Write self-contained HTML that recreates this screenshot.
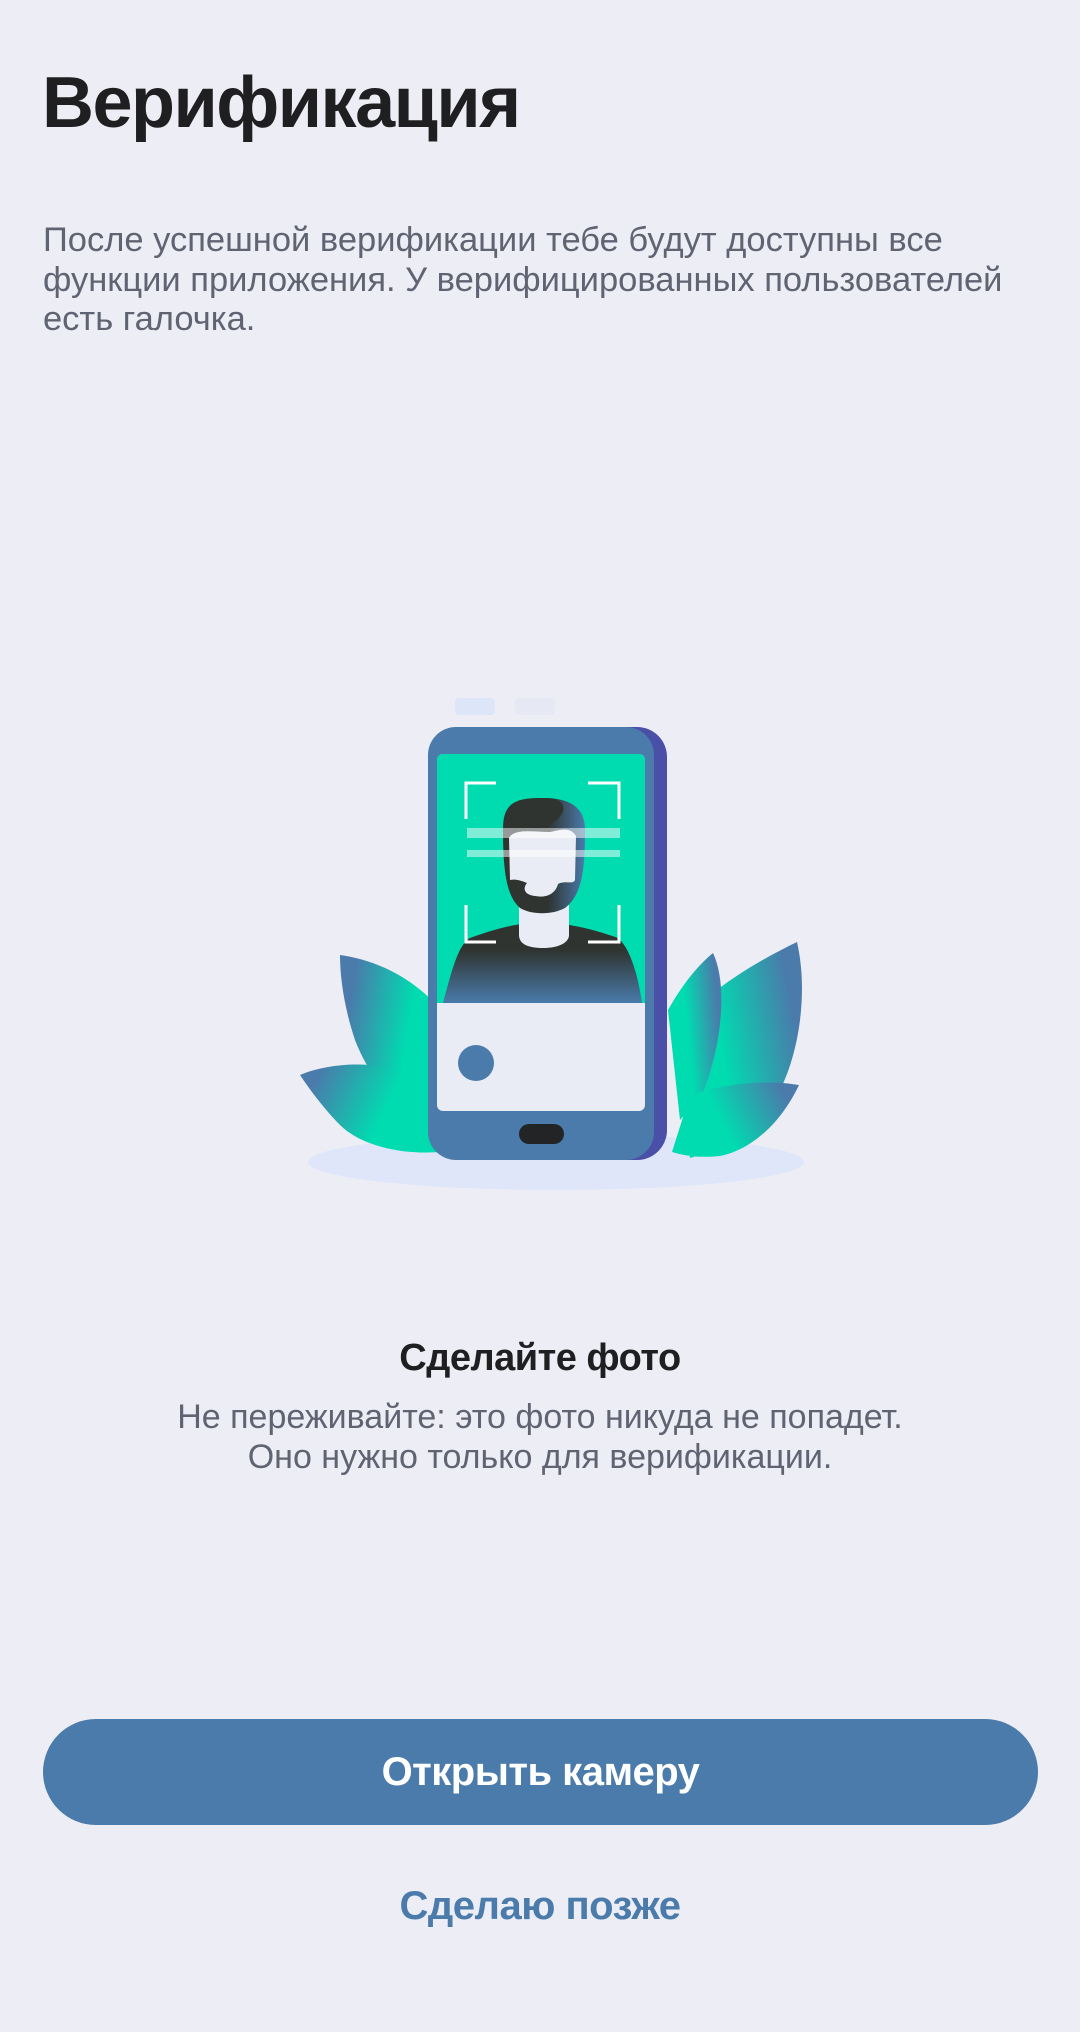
<!DOCTYPE html>
<html><head><meta charset="utf-8"><style>
html,body{margin:0;padding:0;background:#edeef5;}
body{width:1080px;height:2032px;position:relative;overflow:hidden;font-family:"Liberation Sans",sans-serif;}
.t{position:absolute;white-space:nowrap;}
</style></head><body>
<div class="t" style="left:42px;top:62px;font-size:72px;font-weight:bold;color:#1f1f21;letter-spacing:-1.5px;">Верификация</div>
<div class="t" style="left:43px;top:221px;font-size:34.5px;line-height:39.5px;color:#5f6372;">После успешной верификации тебе будут доступны все<br>функции приложения. У верифицированных пользователей<br>есть галочка.</div>

<svg style="position:absolute;left:0;top:0" width="1080" height="1300" viewBox="0 0 1080 1300">
<defs>
<linearGradient id="lg" x1="0" y1="0" x2="1" y2="0.3"><stop offset="0.15" stop-color="#4a7bab"/><stop offset="0.7" stop-color="#00dbb0"/></linearGradient>
<linearGradient id="rg" x1="1" y1="0" x2="0" y2="0.3"><stop offset="0.15" stop-color="#4a7bab"/><stop offset="0.7" stop-color="#00dbb0"/></linearGradient>
<linearGradient id="bd" x1="0" y1="0" x2="0" y2="1"><stop offset="0.35" stop-color="#2f3431"/><stop offset="1" stop-color="#4a7bab"/></linearGradient>
<linearGradient id="hr" x1="0" y1="0" x2="1" y2="0"><stop offset="0.55" stop-color="#2f3431"/><stop offset="1" stop-color="#4a7bab"/></linearGradient>
</defs>
<rect x="455" y="698" width="40" height="17" rx="4" fill="#dde6f8"/>
<rect x="515" y="698" width="40" height="17" rx="4" fill="#e6e9f4"/>
<ellipse cx="556" cy="1162" rx="248" ry="28" fill="#dfe6fa"/>
<path d="M340 955 C390 962 425 990 440 1010 L445 1150 C410 1130 370 1080 355 1040 C345 1010 340 980 340 955Z" fill="url(#lg)"/>
<path d="M300 1075 C330 1062 380 1060 410 1075 C435 1100 440 1130 440 1152 C400 1155 360 1145 340 1125 C325 1110 310 1090 300 1075Z" fill="url(#lg)"/>
<path d="M797 942 C808 990 800 1050 780 1090 C760 1130 720 1150 690 1158 L672 1030 C715 985 760 960 797 942Z" fill="url(#rg)"/>
<path d="M713 953 C728 985 722 1045 702 1095 L680 1120 L668 1010 C682 985 698 965 713 953Z" fill="url(#rg)"/>
<path d="M799 1085 C780 1125 750 1150 720 1156 C700 1158 685 1156 672 1152 L690 1095 C730 1082 770 1080 799 1085Z" fill="url(#rg)"/>
<rect x="440" y="727" width="227" height="433" rx="30" fill="#4a4fa8"/>
<rect x="428" y="727" width="226" height="433" rx="28" fill="#4a7bab"/>
<rect x="437" y="754" width="208" height="357" rx="6" fill="#e9ecf5"/>
<path d="M443 754 H639 A6 6 0 0 1 645 760 V1003 H437 V760 A6 6 0 0 1 443 754Z" fill="#00dbb0"/>
<path d="M443 1003 C452 970 458 945 470 938 C500 927 520 923 542 922 C565 923 590 928 618 938 C630 948 638 975 642 1003Z" fill="url(#bd)"/>
<path d="M519 905 V935 C519 945 530 948 543 948 C558 948 569 943 569 935 V905Z" fill="#e9ecf5"/>
<path d="M503 828 C503 800 520 798 543 798 C565 798 585 804 585 830 C585 870 582 895 565 908 C552 915 532 915 520 908 C505 895 503 865 503 828Z" fill="url(#hr)"/>
<path d="M509 838 C514 828 535 832 550 832 C560 830 570 826 576 836 L575 880 C573 885 565 880 558 884 C555 895 545 898 535 896 C525 895 522 889 527 883 C520 880 515 879 510 880Z" fill="#e9ecf5"/>
<path d="M505 832 C505 806 525 798 545 798 C560 798 565 804 563 812 C555 826 540 831 520 829 C512 833 508 833 505 832Z" fill="#2f3431"/>
<g stroke="#fff" stroke-width="3" fill="none">
<path d="M496 783 H466 V819"/><path d="M588 783 H619 V819"/>
<path d="M466 905 V942 H496"/><path d="M619 905 V942 H588"/>
</g>
<rect x="467" y="828" width="153" height="10" fill="#fff" opacity="0.5"/>
<rect x="467" y="850" width="153" height="7" fill="#fff" opacity="0.5"/>
<circle cx="476" cy="1063" r="18" fill="#4a7bab"/>
<rect x="519" y="1124" width="45" height="20" rx="10" fill="#222426"/>
</svg>

<div class="t" style="left:0;width:1080px;text-align:center;top:1337px;font-size:38px;font-weight:bold;color:#1f1f21;letter-spacing:-0.5px;">Сделайте фото</div>
<div class="t" style="left:0;width:1080px;text-align:center;top:1398px;font-size:34px;line-height:39.5px;color:#5f6372;">Не переживайте: это фото никуда не попадет.<br>Оно нужно только для верификации.</div>
<div style="position:absolute;left:43px;top:1719px;width:995px;height:106px;border-radius:53px;background:#4a7bab;color:#fff;font-size:40px;font-weight:bold;text-align:center;line-height:106px;letter-spacing:-0.5px;">Открыть камеру</div>
<div class="t" style="left:0;width:1080px;text-align:center;top:1884px;font-size:40px;font-weight:bold;color:#4a7bab;letter-spacing:-0.5px;">Сделаю позже</div>
</body></html>
